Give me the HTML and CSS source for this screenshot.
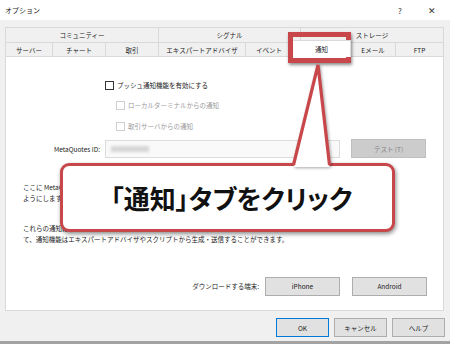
FILE: index.html
```html
<!DOCTYPE html>
<html lang="ja">
<head>
  <meta charset="UTF-8">
  <title>オプション</title>
  <link rel="stylesheet" href="styles.css">
</head>
<body>
  <div class="titlebar">
    <span class="title">オプション</span>
    <span class="ctl">?</span>
    <span class="ctl close">✕</span>
  </div>

  <div class="dialog">
    <div class="tabs">
      <div class="row top">
        <div class="tab">コミュニティー</div>
        <div class="tab">シグナル</div>
        <div class="tab">ストレージ</div>
      </div>
      <div class="row bottom">
        <div class="tab">サーバー</div>
        <div class="tab">チャート</div>
        <div class="tab">取引</div>
        <div class="tab">エキスパートアドバイザ</div>
        <div class="tab">イベント</div>
        <div class="tab active">通知</div>
        <div class="tab">Eメール</div>
        <div class="tab">FTP</div>
      </div>
    </div>

    <div class="panel">
      <label class="opt main"><span class="box"></span>プッシュ通知機能を有効にする</label>
      <label class="opt sub"><span class="box"></span>ローカルターミナルからの通知</label>
      <label class="opt sub second"><span class="box"></span>取引サーバからの通知</label>

      <div class="idrow">
        <span class="idlabel">MetaQuotes ID:</span>
        <div class="idinput"><span class="blur"></span></div>
        <button class="btn disabled">テスト (T)</button>
      </div>

      <p class="note first">ここに MetaQuotes ID を指定すると、モバイル端末版 MetaTrader で取引口座やターミナルの各種イベントの通知を受信できる<br>ようにします。</p>
      <p class="note">これらの通知は取引サーバから送信されるもので、取引口座の取引操作や口座状態の変化についてのお知らせです。そし<br>て、通知機能はエキスパートアドバイザやスクリプトから生成・送信することができます。</p>

      <div class="download">
        <span class="dllabel">ダウンロードする端末:</span>
        <button class="btn wide">iPhone</button>
        <button class="btn wide">Android</button>
      </div>
    </div>

    <div class="footer">
      <button class="btn small default">OK</button>
      <button class="btn small">キャンセル</button>
      <button class="btn small">ヘルプ</button>
    </div>
  </div>
  <div class="taskstrip"></div>

  <!-- annotation overlay -->
  <div class="highlight"></div>
  <div class="callout">「通知」タブをクリック</div>
  <svg class="tail" width="450" height="344" viewBox="0 0 450 344">
    <polygon points="293.5,167 318,65 329.5,167" fill="#fff"/>
    <polyline points="293.5,165 318,65 329.5,165" fill="none" stroke="#c8474b" stroke-width="3.2" stroke-linejoin="miter"/>
  </svg>
</body>
</html>
```

FILE: styles.css
```css
body { margin:0; width:450px; height:344px; overflow:hidden; background:#f0f0f0; position:relative;
  font-family:"Noto Sans CJK JP", "Noto Sans", sans-serif; color:#1a1a1a; font-size:6.5px; }

.titlebar { height:20px; background:#fff; display:flex; align-items:center; padding-left:5px; }
.title { flex:1; font-size:7px; }
.ctl { width:32px; text-align:center; font-size:8px; color:#333; }
.close { font-size:9px; margin-right:2px; }

.dialog { padding:7px 6px 0 5px; }

.row { display:grid; border-left:1px solid #d9d9d9; }
.row.top { grid-template-columns:153px 142px 143px; height:15px; }
.row.bottom { grid-template-columns:47px 53px 53px 87px 47px 58px 45px 48px; height:14px; }
.tab { border-top:1px solid #d9d9d9; border-right:1px solid #d9d9d9; display:flex; align-items:center;
  justify-content:center; font-size:6.5px; color:#222; }
.tab.active { background:#fff; margin-top:-2px; position:relative; z-index:1; margin-bottom:-1px; }

.panel { height:255px; box-sizing:border-box; background:#fff; border:1px solid #d9d9d9; }

.opt { display:flex; align-items:center; gap:3px; height:10px; font-size:6.5px; }
.opt.main { margin:23px 0 0 99px; }
.opt.sub { margin:10px 0 0 110px; color:#9a9a9a; }
.opt.sub.second { margin-top:11px; }
.box { width:7px; height:7px; border:1px solid #333; background:#fff; }
.sub .box { border-color:#cfcfcf; }

.idrow { display:flex; align-items:center; margin-top:8px; height:19px; }
.idlabel { width:94px; text-align:right; font-size:6.5px; color:#222; }
.idinput { margin-left:5px; width:235px; height:18px; box-sizing:border-box; border:1px solid #dcdcdc;
  background:#f9f9f9; display:flex; align-items:center; }
.blur { margin-left:5px; width:38px; height:6px; background:#d6d6d6; filter:blur(1.5px); }

.btn { font-family:inherit; font-size:6.5px; color:#1a1a1a; background:#e1e1e1; border:1px solid #adadad;
  height:19px; padding:0; box-sizing:border-box; }
.btn.disabled { margin-left:11px; width:75px; background:#cccccc; border-color:#bfbfbf; color:#838383; }
.btn.wide { width:75px; }
.btn.small { width:53px; }
.btn.default { border-color:#0078d7; }

.note { margin:23px 0 0 17px; line-height:11px; white-space:nowrap; font-size:6.5px; color:#222; }
.note + .note { margin-top:19px; }
.note.first { margin-top:23.5px; }

.download { display:flex; align-items:center; justify-content:flex-end; gap:12px; margin-top:32px; padding-right:16px; }
.dllabel { margin-right:-6px; color:#222; }

.footer { display:flex; justify-content:flex-end; gap:5px; padding-top:7px; margin-right:-1px; }

.taskstrip { position:absolute; left:0; right:0; bottom:0; height:3px; background:#a3a3a3; }

.highlight { position:absolute; left:288px; top:32px; width:63px; height:31px; box-sizing:border-box;
  border:5px solid #c8474b; box-shadow:1px 2px 3px rgba(0,0,0,.45); }
.callout { position:absolute; left:60px; top:163px; width:335px; height:69px; box-sizing:border-box;
  border:3px solid #c8474b; border-radius:9px; background:#fff; box-shadow:1px 2px 4px rgba(0,0,0,.45);
  display:flex; align-items:center; justify-content:center; padding-left:8px;
  font-size:26px; font-weight:bold; color:#111; font-feature-settings:"palt"; }
.tail { position:absolute; left:0; top:0; pointer-events:none; filter:drop-shadow(1px 1px 1.5px rgba(0,0,0,.35)); }
```
